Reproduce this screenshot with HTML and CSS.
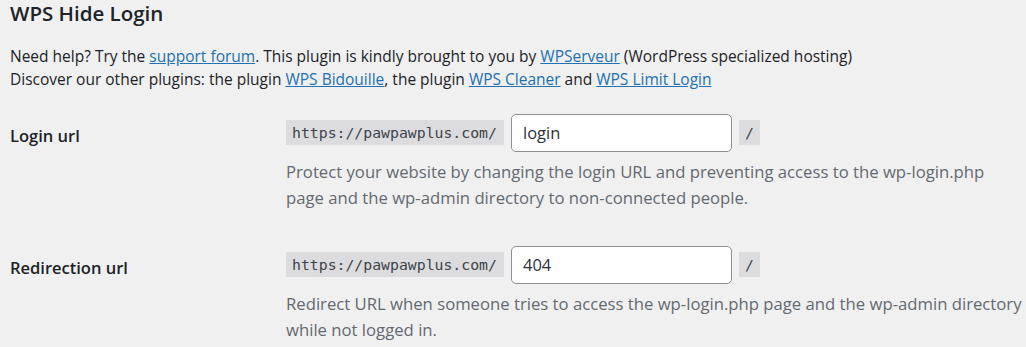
FILE: index.html
```html
<!DOCTYPE html>
<html lang="en">
<head>
<meta charset="utf-8">
<title>WPS Hide Login</title>
<link rel="stylesheet" href="styles.css">
</head>
<body>
<div class="wrap">
  <h2 class="title">WPS Hide Login</h2>
  <p class="intro">Need help? Try the <a href="#">support forum</a>. This plugin is kindly brought to you by <a href="#">WPServeur</a> (WordPress specialized hosting)<br>Discover our other plugins: the plugin <a href="#">WPS Bidouille</a>, the plugin <a href="#">WPS Cleaner</a> and <a href="#">WPS Limit Login</a></p>
  <div class="form-table">
    <div class="row">
      <div class="th">Login url</div>
      <div class="td">
        <div class="field"><code class="prefix">https://pawpawplus.com/</code><input class="text" type="text" value="login"><code class="suffix">/</code></div>
        <p class="description">Protect your website by changing the login URL and preventing access to the wp-login.php page and the wp-admin directory to non-connected people.</p>
      </div>
    </div>
    <div class="row">
      <div class="th">Redirection url</div>
      <div class="td">
        <div class="field"><code class="prefix">https://pawpawplus.com/</code><input class="text" type="text" value="404"><code class="suffix">/</code></div>
        <p class="description">Redirect URL when someone tries to access the wp-login.php page and the wp-admin directory while not logged in.</p>
      </div>
    </div>
  </div>
</div>
</body>
</html>
```
FILE: styles.css
```css
html, body {
  margin: 0;
  padding: 0;
  background: #f0f0f1;
}
body {
  font-family: "Open Sans", "Noto Sans", sans-serif;
  color: #1d2327;
  font-size: 15.5px;
  line-height: 22.75px;
}
.wrap {
  padding: 0 0 0 10px;
}
.title {
  margin: 0;
  padding-top: 0;
  font-size: 20.5px;
  font-weight: 600;
  line-height: 26px;
  color: #1d2327;
}
.intro {
  margin: 19px 0 0 0;
}
.intro a {
  color: #2271b1;
  text-decoration: underline;
}
.form-table {
  margin-top: 13px;
}
.row {
  display: grid;
  grid-template-columns: 276px 1fr;
  height: 132px;
}
.row:last-child {
  height: auto;
}
.th {
  font-weight: 600;
  font-size: 16.5px;
  padding-top: 19px;
  line-height: 26px;
}
.td {
  display: flex;
  flex-direction: column;
}
.field {
  display: flex;
  align-items: center;
  gap: 7px;
  height: 38px;
  margin-top: 10px;
}
code {
  font-family: "DejaVu Sans Mono", "Liberation Mono", monospace;
  font-size: 14.8px;
  background: #dcdcde;
  color: #3c434a;
  height: 25px;
  line-height: 25px;
  padding: 0 6px;
  box-sizing: border-box;
}
.prefix {
  width: 218px;
}
.suffix {
  width: 21px;
  text-align: center;
}
.text {
  width: 221px;
  height: 38px;
  box-sizing: border-box;
  border: 1px solid #8c8f94;
  border-radius: 5px;
  background: #fff;
  padding: 0 11px;
  font-family: "Open Sans", "Noto Sans", sans-serif;
  font-size: 16.5px;
  color: #2c3338;
  margin: 0;
}
.description {
  margin: 7px 0 0 0;
  color: #646970;
  font-size: 16.7px;
  line-height: 26px;
  max-width: 738px;
}
```
